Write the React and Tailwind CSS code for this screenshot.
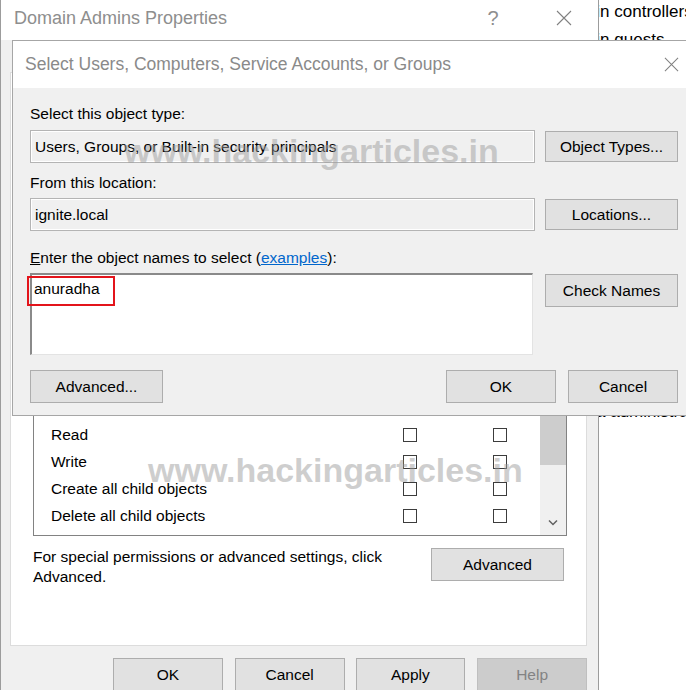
const Btn = ({ children, className = "", disabled = false }) => (
  <div
    className={`flex items-center justify-center border ${
      disabled ? "bg-[#cccccc] border-[#bfbfbf] text-[#838383]" : "bg-[#e1e1e1] border-[#adadad] text-black"
    } ${className}`}
  >
    {children}
  </div>
);

const XIcon = ({ size = 16, color = "#7a7a7a" }) => (
  <svg width={size} height={size} viewBox="0 0 16 16" className="shrink-0">
    <path d="M1 1L15 15M15 1L1 15" stroke={color} strokeWidth="1.1" fill="none" />
  </svg>
);

const Check = () => <div className="w-[14px] h-[14px] border border-[#3c3c3c] bg-white shrink-0" />;

const Row = ({ label }) => (
  <div className="h-[27px] flex items-center pl-[17px]">
    <span className="w-[352px] whitespace-nowrap">{label}</span>
    <Check />
    <div className="w-[76px]" />
    <Check />
  </div>
);

export default function App() {
  return (
    <div className="relative w-[686px] h-[690px] overflow-hidden bg-white font-['Liberation_Sans',Arial,sans-serif] text-[15.5px] text-black">
      {/* list behind the windows */}
      <div className="absolute left-[551px] top-[-2px] text-[17px] leading-[28px] whitespace-nowrap">
        <div>Domain controllers</div>
        <div>Domain guests</div>
      </div>
      <div className="absolute left-[596px] top-[398px] text-[17px] leading-[28px] whitespace-nowrap">
        a administrators
      </div>

      {/* background window */}
      <div className="absolute left-0 top-0 z-10 w-[599px] h-[690px] border-l border-r border-[#9c9c9c] bg-[#f0f0f0] flex flex-col overflow-hidden">
        <div className="h-[40px] shrink-0 bg-white flex items-center pl-[13px] pr-[26px] pb-[4px]">
          <span className="text-[18px] text-[#8e8e8e] whitespace-nowrap">Domain Admins Properties</span>
          <div className="flex-1" />
          <span className="w-[20px] text-center text-[20px] text-[#8e8e8e]">?</span>
          <div className="w-[53px]" />
          <XIcon size={16} color="#808080" />
        </div>
        <div className="pt-[32px] pl-[9px] pr-[11px]">
          <div className="h-[574px] bg-white border border-[#dcdcdc] pl-[22px]">
            <div className="h-[307px]" />
            <div className="w-[534px] h-[156px] border border-[#828282] flex overflow-hidden">
              <div className="flex-1 pt-[13px] overflow-hidden">
                <Row label="Full control" />
                <Row label="Read" />
                <Row label="Write" />
                <Row label="Create all child objects" />
                <Row label="Delete all child objects" />
                <Row label="Special permissions" />
              </div>
              <div className="w-[26px] bg-[#f0f0f0] flex flex-col">
                <div className="h-[84px] bg-[#cdcdcd]" />
                <div className="flex-1" />
                <div className="h-[26px] flex items-center justify-center">
                  <svg width="10" height="7" viewBox="0 0 10 7">
                    <path d="M1 1.5L5 5.5L9 1.5" stroke="#606060" strokeWidth="1.5" fill="none" />
                  </svg>
                </div>
              </div>
            </div>
            <div className="mt-[11px] flex">
              <div className="w-[398px] leading-[20px]">
                For special permissions or advanced settings, click
                <br />
                Advanced.
              </div>
              <Btn className="mt-[1px] w-[133px] h-[33px]">Advanced</Btn>
            </div>
          </div>
          <div className="mt-[12px] flex pl-[103px]">
            <Btn className="w-[110px] h-[33px]">OK</Btn>
            <Btn className="ml-[12px] w-[110px] h-[33px]">Cancel</Btn>
            <Btn className="ml-[11px] w-[110px] h-[33px]">Apply</Btn>
            <Btn disabled className="ml-[12px] w-[110px] h-[33px]">Help</Btn>
          </div>
        </div>
      </div>

      {/* front dialog */}
      <div className="absolute left-[12px] top-[40px] z-20 w-[676px] h-[376px] border border-[#a6a6a6] bg-[#f0f0f0] flex flex-col">
        <div className="h-[47px] shrink-0 bg-white flex items-center pl-[12px] pr-[8px]">
          <span className="flex-1 text-[17.5px] text-[#8a8a8a] whitespace-nowrap">
            Select Users, Computers, Service Accounts, or Groups
          </span>
          <XIcon size={15} color="#808080" />
        </div>
        <div className="flex-1 pl-[17px] pt-[17px]">
          <div className="leading-[18px]">Select this object type:</div>
          <div className="mt-[7px] flex items-start">
            <div className="w-[505px] h-[33px] border border-[#b4b4b4] shadow-[inset_0_0_0_1px_#ffffff] flex items-center pl-[4px] whitespace-nowrap">
              Users, Groups, or Built-in security principals
            </div>
            <Btn className="ml-[10px] mt-[1px] w-[133px] h-[31px]">Object Types...</Btn>
          </div>
          <div className="mt-[11px] leading-[18px]">From this location:</div>
          <div className="mt-[6px] flex items-start">
            <div className="w-[505px] h-[33px] border border-[#b4b4b4] shadow-[inset_0_0_0_1px_#ffffff] flex items-center pl-[4px]">
              ignite.local
            </div>
            <Btn className="ml-[10px] mt-[1px] w-[133px] h-[31px]">Locations...</Btn>
          </div>
          <div className="mt-[18px] leading-[18px] whitespace-nowrap">
            <span className="underline">E</span>nter the object names to select (
            <span className="text-[#0066cc] underline">examples</span>):
          </div>
          <div className="mt-[6px] flex items-start">
            <div className="relative w-[503px] h-[82px] bg-white border-t-2 border-l-2 border-r border-b border-t-[#8a8a8a] border-l-[#8a8a8a] border-r-[#e3e3e3] border-b-[#e3e3e3] pl-[2px] pt-[5px] leading-[18px]">
              anuradha
              <div className="absolute left-[-5px] top-[1px] w-[88px] h-[30px] border-2 border-[#e3141b]" />
            </div>
            <Btn className="ml-[12px] mt-[1px] w-[133px] h-[33px]">Check Names</Btn>
          </div>
          <div className="mt-[15px] flex">
            <Btn className="w-[133px] h-[33px]">Advanced...</Btn>
            <Btn className="ml-[283px] w-[110px] h-[33px]">OK</Btn>
            <Btn className="ml-[12px] w-[110px] h-[33px]">Cancel</Btn>
          </div>
        </div>
      </div>

      {/* watermarks */}
      <div className="absolute left-[124px] top-[134px] z-30 text-[34px] leading-none font-bold text-[#9e9e9e]/50 whitespace-nowrap pointer-events-none">
        www.hackingarticles.in
      </div>
      <div className="absolute left-[148px] top-[453px] z-30 text-[34px] leading-none font-bold text-[#9e9e9e]/50 whitespace-nowrap pointer-events-none">
        www.hackingarticles.in
      </div>
    </div>
  );
}
